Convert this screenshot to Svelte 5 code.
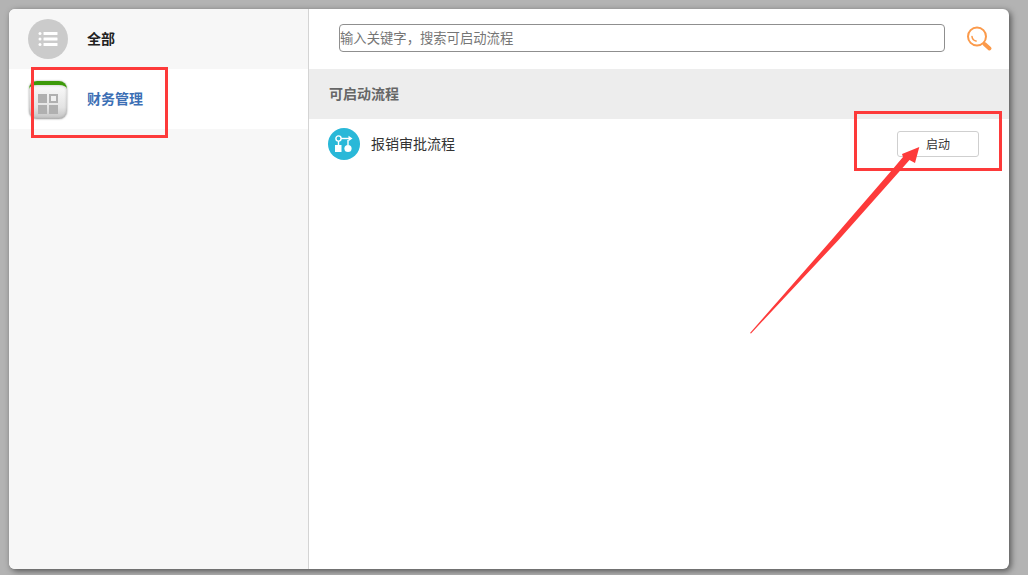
<script lang="ts">
  const categories = [
    { id: 'all', name: '全部' },
    { id: 'finance', name: '财务管理' }
  ];
  const flows = [{ id: 1, name: '报销审批流程' }];
</script>

<div class="desktop">
  <div class="window">
    <aside class="sidebar">
      {#each categories as cat}
        <div class="cat" class:active={cat.id === 'finance'}>
          {#if cat.id === 'all'}
            <span class="all-icon">
              <svg width="20" height="16" viewBox="0 0 20 16" fill="#fff">
                <rect x="0.5" y="1" width="3" height="3" rx="1.5" />
                <rect x="0.5" y="6.5" width="3" height="3" rx="1.5" />
                <rect x="0.5" y="12" width="3" height="3" rx="1.5" />
                <rect x="5.5" y="1" width="14" height="3" rx="0.5" />
                <rect x="5.5" y="6.5" width="14" height="3" rx="0.5" />
                <rect x="5.5" y="12" width="14" height="3" rx="0.5" />
              </svg>
            </span>
          {:else}
            <span class="app-icon">
              <span class="tile"></span>
              <span class="tile hollow"></span>
              <span class="tile"></span>
              <span class="tile"></span>
            </span>
          {/if}
          <span class="cat-name">{cat.name}</span>
        </div>
      {/each}
    </aside>

    <main class="content">
      <div class="search">
        <input class="search-input" type="text" placeholder="输入关键字，搜索可启动流程" />
        <svg class="search-btn" width="28" height="28" viewBox="0 0 28 28" fill="none">
          <circle cx="11" cy="11.5" r="9" stroke="#fb9a4b" stroke-width="2" />
          <path d="M6 11.5a5.5 5.5 0 0 0 4 4.6" stroke="#fb9a4b" stroke-width="1.6" stroke-linecap="round" />
          <path d="M18.5 19 L23.5 23.5" stroke="#fb9a4b" stroke-width="4" stroke-linecap="round" />
        </svg>
      </div>

      <div class="section-title">可启动流程</div>

      {#each flows as flow}
        <div class="flow">
          <span class="flow-icon">
            <svg width="20" height="18" viewBox="0 0 20 18" fill="#fff">
              <circle cx="4.5" cy="3.5" r="2.6" fill="none" stroke="#fff" stroke-width="1.4" />
              <rect x="1" y="10" width="6.5" height="7" />
              <rect x="3.8" y="6" width="1.4" height="4" />
              <rect x="7" y="2.8" width="8" height="1.4" />
              <path d="M14.5 0.8 L18.5 3.5 L14.5 6.2 Z" />
              <rect x="13.3" y="5" width="1.4" height="5" />
              <circle cx="14" cy="13.5" r="3.6" />
            </svg>
          </span>
          <span class="flow-name">{flow.name}</span>
          <button class="start">启动</button>
        </div>
      {/each}
    </main>
  </div>

  <!-- annotations drawn over the screenshot -->
  <div class="mark mark-cat"></div>
  <div class="mark mark-btn"></div>
  <svg class="arrow" width="1028" height="575" viewBox="0 0 1028 575">
    <polygon
      points="750,333 831.5,240 892,170 903,157 902,154 919.3,147 915,163 909.5,160 900.7,170 838.5,240 751,333.5"
      fill="#fd3a3a"
    />
  </svg>
</div>

<style>
  :global(body) {
    margin: 0;
    overflow: hidden;
  }

  .desktop {
    position: relative;
    width: 1028px;
    height: 575px;
    padding: 9px 19px 6px 9px;
    box-sizing: border-box;
    background: #b3b3b3;
    font-family: "Liberation Sans", "Noto Sans CJK SC", sans-serif;
  }

  .window {
    display: flex;
    width: 1000px;
    height: 560px;
    border-radius: 6px;
    overflow: hidden;
    background: #fff;
    box-shadow: 2px 2px 6px rgba(0, 0, 0, 0.55);
  }

  .sidebar {
    width: 299px;
    flex: none;
    background: #f7f7f7;
    border-right: 1px solid #d4d4d4;
  }

  .cat {
    display: flex;
    align-items: center;
    height: 60px;
    padding-left: 19px;
    box-sizing: border-box;
  }

  .cat.active {
    background: #fff;
  }

  .all-icon {
    display: flex;
    align-items: center;
    justify-content: center;
    width: 40px;
    height: 40px;
    border-radius: 50%;
    background: #cbcbcb;
  }

  .app-icon {
    display: grid;
    grid-template-columns: 9px 9px;
    grid-auto-rows: 9px;
    gap: 2px;
    align-content: center;
    justify-content: center;
    width: 38px;
    height: 38px;
    margin-left: 1px;
    margin-top: 1px;
    box-sizing: border-box;
    padding-top: 4px;
    border-radius: 8px;
    border-top: 4px solid #3d9a0a;
    background: linear-gradient(#fafafa, #e4e4e4 65%, #c2c2c2);
    box-shadow: 0 0 2px rgba(0, 0, 0, 0.4), inset 0 0 3px rgba(0, 0, 0, 0.25);
  }

  .tile {
    background: #b0b0b0;
  }

  .tile.hollow {
    background: #f0f0f0;
    border: 2px solid #b0b0b0;
    box-sizing: border-box;
  }

  .cat-name {
    margin-left: 19px;
    padding-bottom: 2px;
    font-size: 14px;
    font-weight: 700;
    color: #222;
  }

  .active .cat-name {
    margin-left: 20px;
    color: #3c6fb5;
  }

  .content {
    flex: 1;
    min-width: 0;
  }

  .search {
    display: flex;
    align-items: center;
    height: 60px;
    padding: 0 0 2px 30px;
    box-sizing: border-box;
  }

  .search-input {
    width: 606px;
    height: 28px;
    padding: 0;
    box-sizing: border-box;
    border: 1px solid #8f8f8f;
    border-radius: 4px;
    outline: none;
    background: #fff;
    font: 13.33px "Liberation Sans", "Noto Sans CJK SC", sans-serif;
  }

  .search-input::placeholder {
    color: #757575;
    opacity: 1;
  }

  .search-btn {
    margin-left: 21px;
    margin-top: 2px;
  }

  .section-title {
    height: 50px;
    line-height: 50px;
    padding-left: 20px;
    background: #ededed;
    font-size: 14px;
    font-weight: 700;
    color: #666;
  }

  .flow {
    display: flex;
    align-items: center;
    height: 50px;
    padding: 0 30px 0 19px;
  }

  .flow-icon {
    display: flex;
    align-items: center;
    justify-content: center;
    width: 32px;
    height: 32px;
    border-radius: 50%;
    background: #29b8d8;
  }

  .flow-name {
    flex: 1;
    margin-left: 11px;
    padding-bottom: 2px;
    font-size: 14px;
    color: #333;
  }

  .start {
    width: 82px;
    height: 26px;
    padding: 0 0 2px;
    border: 1px solid #cfcfcf;
    border-radius: 3px;
    background: #fff;
    font: 12px "Liberation Sans", "Noto Sans CJK SC", sans-serif;
    color: #333;
  }

  /* red boxes */
  .mark {
    position: absolute;
    box-sizing: border-box;
    border: 3px solid #fd3a3a;
  }

  .mark-cat {
    left: 31px;
    top: 67px;
    width: 137px;
    height: 71px;
  }

  .mark-btn {
    left: 854px;
    top: 111px;
    width: 148px;
    height: 60px;
  }

  .arrow {
    position: absolute;
    left: 0;
    top: 0;
    pointer-events: none;
  }
</style>
